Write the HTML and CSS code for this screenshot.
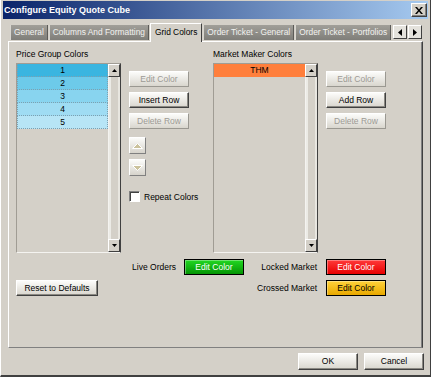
FILE: index.html
```html
<!DOCTYPE html>
<html lang="en">
<head>
    <meta charset="UTF-8">
    <title>Configure Equity Quote Cube</title>
    <link rel="stylesheet" href="styles.css">
</head>
<body>
<div class="window">
    <div class="titlebar">
        <span class="title">Configure Equity Quote Cube</span>
        <button type="button" class="close">
            <svg width="8" height="7" viewBox="0 0 8 7"><path d="M0 0h2l2 2.5L6 0h2L5 3.5 8 7H6L4 4.5 2 7H0l3-3.5z" fill="#000"/></svg>
        </button>
    </div>

    <div class="tabs">
        <div class="tab">General</div>
        <div class="tab">Columns And Formatting</div>
        <div class="tab active">Grid Colors</div>
        <div class="tab">Order Ticket - General</div>
        <div class="tab">Order Ticket - Portfolios</div>
        <div class="tab-arrows">
            <button type="button" class="arrow"><svg width="4" height="7" viewBox="0 0 4 7"><path d="M4 0v7L0 3.5z"/></svg></button>
            <button type="button" class="arrow"><svg width="4" height="7" viewBox="0 0 4 7"><path d="M0 0v7l4-3.5z"/></svg></button>
        </div>
    </div>

    <div class="panel">
        <div class="groups">
            <div class="group">
                <div class="label">Price Group Colors</div>
                <div class="group-body">
                    <div class="listbox">
                        <div class="rows">
                            <div class="row c1">1</div>
                            <div class="row c2">2</div>
                            <div class="row c3">3</div>
                            <div class="row c4">4</div>
                            <div class="row c5">5</div>
                        </div>
                        <div class="scrollbar">
                            <div class="sb-btn"><svg width="5" height="3" viewBox="0 0 5 3"><path d="M0 3h5L2.5 0z"/></svg></div>
                            <div class="sb-track"></div>
                            <div class="sb-btn"><svg width="5" height="3" viewBox="0 0 5 3"><path d="M0 0h5L2.5 3z"/></svg></div>
                        </div>
                    </div>
                    <div class="actions">
                        <button type="button" class="btn" disabled>Edit Color</button>
                        <button type="button" class="btn">Insert Row</button>
                        <button type="button" class="btn" disabled>Delete Row</button>
                        <div class="movers">
                            <button type="button" class="mover"><svg width="11" height="6" viewBox="0 0 11 6"><path d="M0.5 5.5h10L5.5 0.5z" fill="#cbc29c" stroke="#fff"/></svg></button>
                            <button type="button" class="mover"><svg width="11" height="6" viewBox="0 0 11 6"><path d="M0.5 0.5h10L5.5 5.5z" fill="#cbc29c" stroke="#fff"/></svg></button>
                        </div>
                        <label class="check"><span class="box"></span>Repeat Colors</label>
                    </div>
                </div>
            </div>

            <div class="group">
                <div class="label">Market Maker Colors</div>
                <div class="group-body">
                    <div class="listbox">
                        <div class="rows">
                            <div class="row mm">THM</div>
                        </div>
                        <div class="scrollbar">
                            <div class="sb-btn"><svg width="5" height="3" viewBox="0 0 5 3"><path d="M0 3h5L2.5 0z"/></svg></div>
                            <div class="sb-track"></div>
                            <div class="sb-btn"><svg width="5" height="3" viewBox="0 0 5 3"><path d="M0 0h5L2.5 3z"/></svg></div>
                        </div>
                    </div>
                    <div class="actions">
                        <button type="button" class="btn" disabled>Edit Color</button>
                        <button type="button" class="btn">Add Row</button>
                        <button type="button" class="btn" disabled>Delete Row</button>
                    </div>
                </div>
            </div>
        </div>

        <div class="legend">
            <div class="cap live-cap">Live Orders</div>
            <button type="button" class="btn swatch green">Edit Color</button>
            <div class="cap">Locked Market</div>
            <button type="button" class="btn swatch red">Edit Color</button>

            <button type="button" class="btn reset">Reset to Defaults</button>
            <div class="cap cross-cap">Crossed Market</div>
            <button type="button" class="btn swatch yellow">Edit Color</button>
        </div>
    </div>

    <div class="footer">
        <button type="button" class="btn wide">OK</button>
        <button type="button" class="btn wide">Cancel</button>
    </div>
</div>
</body>
</html>
```

FILE: styles.css
```css
* {
    box-sizing: border-box;
    margin: 0;
    padding: 0;
}

html,
body {
    width: 431px;
    height: 377px;
    overflow: hidden;
}

body {
    background: #d4d0c8;
    font-family: "Liberation Sans", Arial, sans-serif;
    font-size: 8.5px;
    color: #000;
}

button {
    font-family: inherit;
    font-size: inherit;
}

.window {
    width: 431px;
    height: 377px;
    padding: 1px 2px 0 2px;
    border-left: 1px solid #fff;
    border-bottom: 2px solid #404040;
    border-right: 1px solid #404040;
    box-shadow: inset 1px 0 #d4d0c8;
}

.titlebar {
    height: 18px;
    display: flex;
    align-items: center;
    justify-content: space-between;
    padding: 0 1px 0 1px;
    background: linear-gradient(to right, #0a246a, #a6caf0);
}

.title {
    color: #fff;
    font-weight: bold;
    font-size: 9px;
}

.close {
    width: 16px;
    height: 14px;
    display: grid;
    place-items: center;
    background: #d4d0c8;
    border: 1px solid;
    border-color: #fff #404040 #404040 #fff;
    box-shadow: inset -1px -1px #808080;
}

/* tab strip */
.tabs {
    display: flex;
    align-items: flex-end;
    height: 21px;
    margin-top: 1px;
    padding-left: 7px;
    position: relative;
    z-index: 1;
    font-size: 8.4px;
}

.tab {
    height: 15px;
    margin-bottom: 1px;
    padding: 0 3px;
    line-height: 14px;
    white-space: nowrap;
    color: #f2f2f0;
    background: linear-gradient(#a19f99, #7f7e79);
    border-left: 1px solid #d8d6d0;
    border-right: 1px solid #5c5b58;
    margin-right: 1px;
}

.tab.active {
    height: 19px;
    margin-bottom: -1px;
    padding: 0 4px;
    color: #000;
    background: #d4d0c8;
    border-top: 1px solid #fff;
    border-left: 1px solid #fff;
    border-right: 1px solid #404040;
    line-height: 16px;
}

.tab-arrows {
    display: flex;
    gap: 1px;
    margin-bottom: 2px;
    margin-left: 1px;
}

.arrow {
    width: 14px;
    height: 14px;
    display: grid;
    place-items: center;
    background: #e4e2dc;
    border: 1px solid;
    border-color: #fff #404040 #404040 #fff;
}

/* main page */
.panel {
    height: 307px;
    margin: 0 5px 0 5px;
    padding: 7px 0 0 7px;
    border: 1px solid;
    border-color: #fff #404040 #808080 #fff;
    box-shadow: inset -1px 0 #808080;
}

.groups {
    display: grid;
    grid-template-columns: 197px 180px;
}

.label {
    height: 11px;
    line-height: 11px;
}

.group-body {
    display: flex;
    margin-top: 3px;
}

.listbox {
    width: 105px;
    height: 190px;
    display: flex;
    border: 1px solid;
    border-color: #a09c94 #404040 #f4f3f0 #a09c94;
}

.rows {
    flex: 1;
}

.row {
    height: 13px;
    line-height: 12px;
    text-align: center;
    border: 1px dotted #7ea0b0;
    border-top: none;
}

.c1 { background: #3ab5e0; }
.c2 { background: #6dcaea; }
.c3 { background: #88d4ef; }
.c4 { background: #9fdcf3; }
.c5 { background: #b7e5f6; }

.row.mm {
    background: #ff7f3c;
    border: none;
    line-height: 13px;
}

.scrollbar {
    width: 12px;
    display: flex;
    flex-direction: column;
}

.sb-btn {
    height: 13px;
    display: grid;
    place-items: center;
    background: #d4d0c8;
    border: 1px solid;
    border-color: #fff #404040 #404040 #fff;
}

.sb-track {
    flex: 1;
    background: #d4d0c8;
    border-left: 1px solid #f4f3f0;
    border-right: 2px solid #e8e6e0;
    box-shadow: inset 2px 0 #ecebe6;
}

.actions {
    width: 60px;
    margin-left: 8px;
    padding-top: 8px;
    display: flex;
    flex-direction: column;
    gap: 5px;
}

.btn {
    height: 16px;
    line-height: 13px;
    text-align: center;
    white-space: nowrap;
    color: #000;
    background: linear-gradient(#fcfcfa, #d9d6ce);
    border: 1px solid;
    border-color: #fff #404040 #404040 #fff;
    box-shadow: inset -1px -1px #8a8882;
}

.btn:disabled {
    color: #9c9a94;
    border-color: #fff #9a9891 #9a9891 #fff;
    box-shadow: none;
}

.movers {
    margin-top: 3px;
    display: flex;
    flex-direction: column;
    gap: 5px;
}

.mover {
    width: 17px;
    height: 17px;
    display: grid;
    place-items: center;
    background: linear-gradient(#fcfcfa, #d6d3cb);
    border: 1px solid;
    border-color: #fff #808080 #808080 #fff;
}

.check {
    margin-top: 10px;
    display: flex;
    align-items: center;
    gap: 4px;
    white-space: nowrap;
}

.box {
    flex: none;
    width: 11px;
    height: 11px;
    background: #fff;
    border: 1px solid;
    border-color: #808080 #fff #fff #808080;
    box-shadow: inset 1px 1px #404040;
}

/* colour legend */
.legend {
    display: grid;
    grid-template-columns: 105px 63px 60px 82px 60px;
    grid-template-rows: 16px 16px;
    row-gap: 5px;
    margin-top: 6px;
}

.cap {
    text-align: right;
    padding-right: 9px;
    line-height: 16px;
}

.live-cap {
    grid-column: 2;
    padding-right: 8px;
}

.reset {
    grid-column: 1;
    width: 82px;
}

.cross-cap {
    grid-column: 4;
}

.swatch {
    border-color: #000;
    box-shadow: inset 1px 1px rgba(255, 255, 255, 0.35);
}

.green {
    color: #fff;
    background: linear-gradient(#22d822, #049404);
}

.red {
    color: #fff;
    background: linear-gradient(#ff3a3a, #e80000);
}

.yellow {
    background: linear-gradient(#ffd23a, #e8a800);
}

.footer {
    display: flex;
    justify-content: flex-end;
    gap: 6px;
    padding: 5px 4px 0 0;
}

.wide {
    width: 60px;
    height: 17px;
}
```
